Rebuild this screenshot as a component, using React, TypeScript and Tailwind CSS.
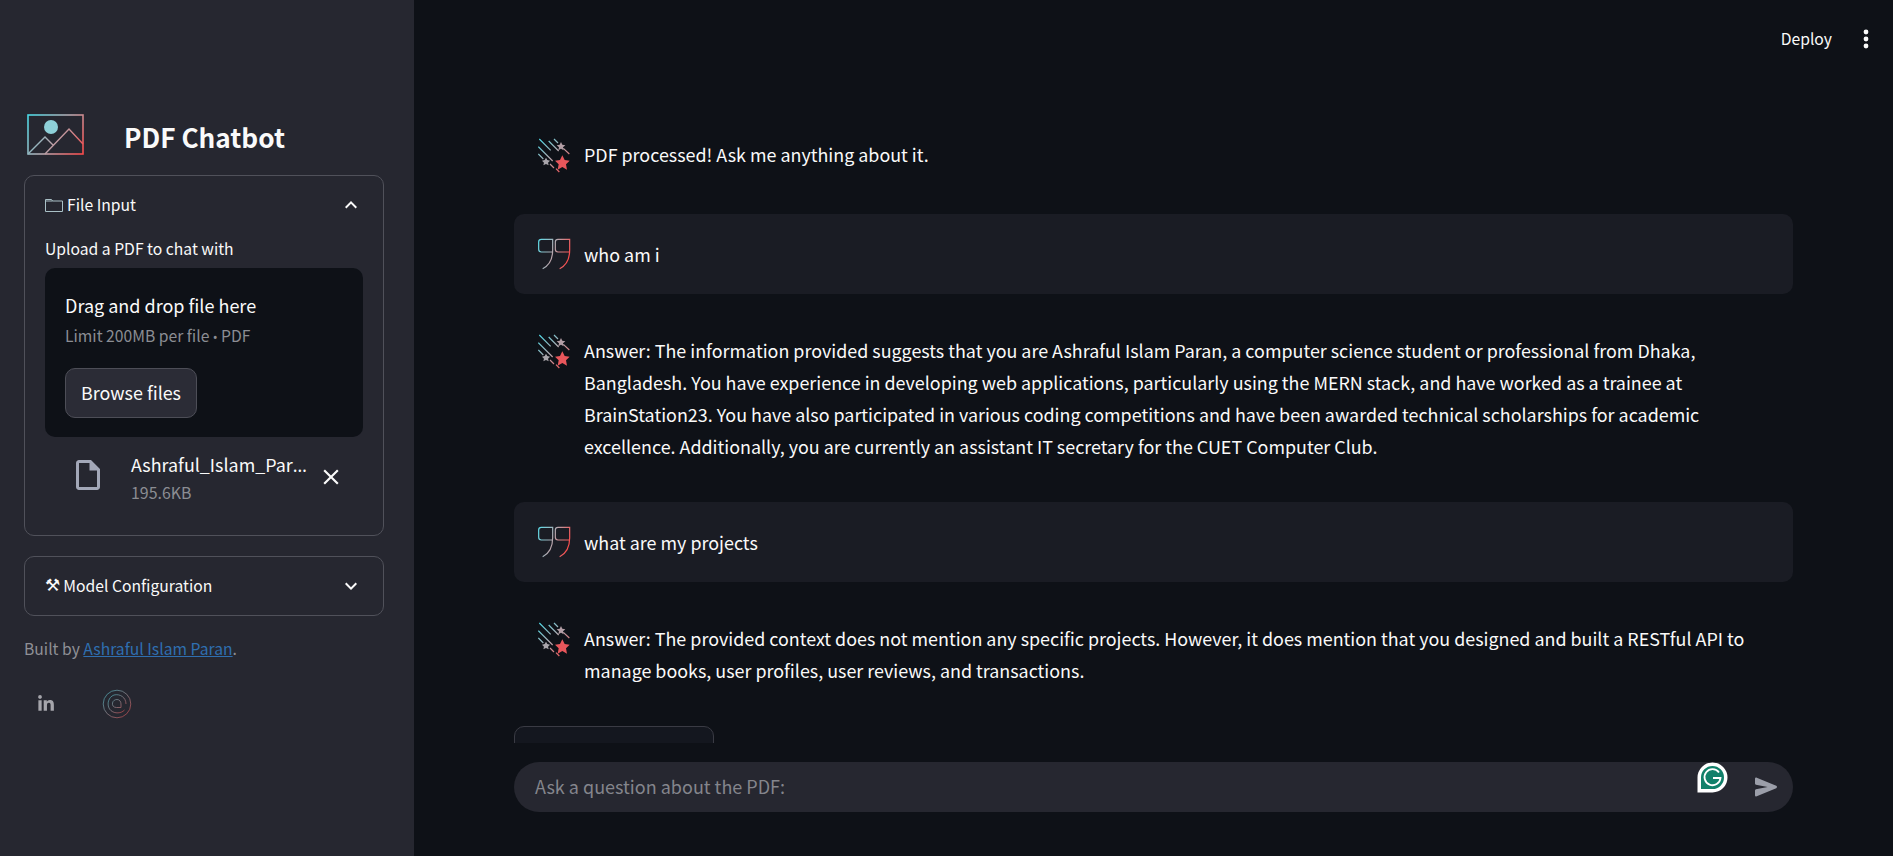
import { FaLinkedinIn } from "react-icons/fa";

const FONT = "font-['Noto_Sans_CJK_SC','Noto_Sans',sans-serif]";

const LINE_TWO = [
  "Answer: The information provided suggests that you are Ashraful Islam Paran, a computer science student or professional from Dhaka,",
  "Bangladesh. You have experience in developing web applications, particularly using the MERN stack, and have worked as a trainee at",
  "BrainStation23. You have also participated in various coding competitions and have been awarded technical scholarships for academic",
  "excellence. Additionally, you are currently an assistant IT secretary for the CUET Computer Club.",
];

const LINE_THREE = [
  "Answer: The provided context does not mention any specific projects. However, it does mention that you designed and built a RESTful API to",
  "manage books, user profiles, user reviews, and transactions.",
];

function Grad({ id }: { id: string }) {
  return (
    <defs>
      <linearGradient id={id} x1="0" y1="0" x2="1" y2="1">
        <stop offset="0%" stopColor="#45dbe8" />
        <stop offset="50%" stopColor="#b6a6ad" />
        <stop offset="100%" stopColor="#ff4242" />
      </linearGradient>
    </defs>
  );
}

function Logo() {
  return (
    <svg width="58" height="42" viewBox="0 0 58 42" fill="none">
      <defs>
        <linearGradient id="logo" gradientUnits="userSpaceOnUse" x1="0" y1="0" x2="58" y2="42">
          <stop offset="0%" stopColor="#45dbe8" />
          <stop offset="50%" stopColor="#b6a6ad" />
          <stop offset="100%" stopColor="#ff4242" />
        </linearGradient>
      </defs>
      <rect x="1" y="1" width="55" height="39" stroke="url(#logo)" strokeWidth="1.6" />
      <circle cx="24" cy="13" r="7" fill="#8ed0d8" />
      <path d="M1 40 L18 23 L26 31 M18 40 L42 15 L56 30" stroke="url(#logo)" strokeWidth="1.4" />
    </svg>
  );
}

function BotIcon() {
  return (
    <svg width="33" height="35" viewBox="24 24 99 105" fill="none" className="shrink-0">
      <defs>
        <linearGradient id="bot" gradientUnits="userSpaceOnUse" x1="24" y1="24" x2="120" y2="126">
          <stop offset="0%" stopColor="#45dbe8" />
          <stop offset="50%" stopColor="#b6a6ad" />
          <stop offset="100%" stopColor="#ff4242" />
        </linearGradient>
      </defs>
      <path
        d="M28 27 L62 61 M56 33 L86 63 M72 27 L84 39 M25 50 L68 93 M100 55 L118 72 M25 72 L40 87 M60 102 L72 114 M78 116 L88 126"
        stroke="url(#bot)"
        strokeWidth="3.6"
      />
      <path d="M93 36l4 8 9 2-7 6 2 9-8-5-8 5 2-9-7-6 9-2z" fill="#b29ea5" />
      <path d="M48 83l4 7 8 2-6 6 2 8-8-4-8 4 2-8-6-6 8-2z" fill="#a8a5ab" />
      <path d="M97 76l7 14 15 2-11 11 3 16-14-8-14 8 3-16-11-11 15-2z" fill="#e8565b" />
    </svg>
  );
}

function UserIcon() {
  return (
    <svg width="33" height="32" viewBox="24 26 99 96" fill="none" className="shrink-0">
      <defs>
        <linearGradient id="usr" gradientUnits="userSpaceOnUse" x1="24" y1="40" x2="122" y2="75">
          <stop offset="0%" stopColor="#5fdbe8" />
          <stop offset="50%" stopColor="#b6a6ad" />
          <stop offset="100%" stopColor="#ff4848" />
        </linearGradient>
      </defs>
      <path
        d="M34 30 H68 V62 C68 88 58 108 38 118 M68 68 H34 Q26 68 26 60 V38 Q26 30 34 30"
        stroke="url(#usr)"
        strokeWidth="3.6"
      />
      <path
        d="M84 30 H119 V62 C119 88 109 108 89 118 M119 68 H84 Q76 68 76 60 V38 Q76 30 84 30"
        stroke="url(#usr)"
        strokeWidth="3.6"
      />
    </svg>
  );
}

function Spiral() {
  return (
    <svg width="30" height="30" viewBox="0 0 30 30" fill="none" className="opacity-70">
      <Grad id="spiral" />
      <circle cx="15" cy="15" r="13.8" stroke="url(#spiral)" strokeWidth="0.8" />
      <path
        d="M22.5 21 C19 25 11 25 7.5 20 C4.5 15 6.5 8 12 6 C18 4.5 24 8.5 24 15 M19 18.5 H14.5 C11.5 18.5 10 16.5 10.5 14 C11 11.5 13 10.5 15 10.5 C17.5 10.5 19 12.5 19 15 V18.5"
        stroke="url(#spiral)"
        strokeWidth="0.8"
      />
    </svg>
  );
}

function Chevron({ up }: { up?: boolean }) {
  return (
    <svg width="24" height="24" viewBox="0 0 24 24" fill="#fafafa">
      {up ? (
        <path d="M12 8l-6 6 1.41 1.41L12 10.83l4.59 4.58L18 14z" />
      ) : (
        <path d="M16.59 8.59 12 13.17 7.41 8.59 6 10l6 6 6-6z" />
      )}
    </svg>
  );
}

function BotMessage({ lines, first }: { lines: string[]; first?: boolean }) {
  return (
    <div className={`flex shrink-0 gap-[13px] py-[24px] pl-[24px] ${first ? "mb-[4px]" : ""}`}>
      <div className="h-[32px]">
        <BotIcon />
      </div>
      <div className="text-[17.9px] leading-[32px] text-[#fafafa] whitespace-nowrap">
        {lines.map((l) => (
          <div key={l}>{l}</div>
        ))}
      </div>
    </div>
  );
}

function UserMessage({ text }: { text: string }) {
  return (
    <div className="flex h-[80px] shrink-0 items-center gap-[13px] rounded-[10px] bg-[#1a1c24] pl-[24px]">
      <UserIcon />
      <div className="text-[17.9px] leading-[32px] text-[#fafafa]">{text}</div>
    </div>
  );
}

export default function App() {
  return (
    <div className={`flex h-[856px] w-[1893px] overflow-hidden bg-[#0e1117] ${FONT}`}>
      {/* Sidebar */}
      <aside className="flex w-[414px] shrink-0 flex-col bg-[#262730] pl-[24px] pt-[114px]">
        <div className="flex h-[48px] items-start pl-[3px]">
          <Logo />
          <h1 className="ml-[39px] -mt-[1px] text-[26.2px] font-semibold leading-[48px] text-[#fafafa]">PDF Chatbot</h1>
        </div>

        <div className="mt-[13px] h-[361px] w-[360px] rounded-[10px] border border-[#50515a] px-[20px]">
          <div className="flex h-[58px] items-center justify-between">
            <div className="flex items-center gap-[4px] text-[15.7px] text-[#fafafa]">
              <svg width="18" height="14" viewBox="0 0 18 14" fill="none" stroke="#a9c0c6" strokeWidth="1">
                <path d="M.5 13.5V1.5h6l1 1.5h10v10.5z" />
                <path d="M.5 3h7" />
              </svg>
              File Input
            </div>
            <div>
              <Chevron up />
            </div>
          </div>
          <div className="mt-[3px] text-[15.7px] leading-[24px] text-[#fafafa]">Upload a PDF to chat with</div>
          <div className="mt-[7px] h-[169px] w-[318px] rounded-[10px] bg-[#0e1117] px-[20px] pt-[21px]">
            <div className="text-[18px] leading-[32px] text-[#fafafa]">Drag and drop file here</div>
            <div className="mt-[3px] text-[15.7px] leading-[24px] text-[#8b8d93]">
              Limit 200MB per file<span className="font-['Noto_Sans'] text-[13px]"> • </span>PDF
            </div>
            <button className="mt-[19px] h-[50px] w-[132px] rounded-[10px] border border-[#4d4e57] bg-[#2b2c36] pb-[2px] text-[17.9px] text-[#fafafa]">
              Browse files
            </button>
          </div>
          <div className="mt-[14px] flex items-start">
            <svg width="36" height="36" viewBox="0 0 24 24" fill="#a3a8b8" className="ml-[25px] mt-[6px] shrink-0">
              <path d="M14 2H6c-1.1 0-1.99.9-1.99 2L4 20c0 1.1.89 2 1.99 2H18c1.1 0 2-.9 2-2V8l-6-6zM6 20V4h7v5h5v11H6z" />
            </svg>
            <div className="ml-[25px] w-[181px]">
              <div className="-mt-[1px] whitespace-nowrap text-[17.9px] leading-[28px] text-[#fafafa]">
                Ashraful_Islam_Par<span className="font-['Noto_Sans'] tracking-[2px]">…</span>
              </div>
              <div className="text-[15.9px] leading-[28px] text-[#8b8d93]">195.6KB</div>
            </div>
            <svg width="26" height="26" viewBox="0 0 24 24" fill="#fafafa" className="ml-[6px] mt-[13px] shrink-0">
              <path d="M19 6.41 17.59 5 12 10.59 6.41 5 5 6.41 10.59 12 5 17.59 6.41 19 12 13.41 17.59 19 19 17.59 13.41 12z" />
            </svg>
          </div>
        </div>

        <div className="mt-[20px] flex h-[60px] w-[360px] items-center justify-between rounded-[10px] border border-[#50515a] pb-[1px] pl-[20px] pr-[20px]">
          <div className="flex items-center gap-[3px] text-[15.7px] text-[#fafafa]">
            <span className="font-['DejaVu_Sans'] text-[17px]">⚒</span>
            Model Configuration
          </div>
          <Chevron />
        </div>

        <div className="mt-[17px] text-[15.7px] leading-[32px] text-[#8f9096]">
          Built by{" "}
          <a className="text-[#2f6fb0] underline">Ashraful Islam Paran</a>.
        </div>

        <div className="mt-[24px] flex items-center pl-[13px]">
          <FaLinkedinIn className="h-[18px] w-[18px] text-[#a5a5ab]" />
          <div className="ml-[47px]">
            <Spiral />
          </div>
        </div>
      </aside>

      {/* Main */}
      <main className="relative flex min-w-0 flex-1 flex-col">
        <header className="flex h-[114px] shrink-0 items-start justify-end pr-[24px] pt-[24px] text-[15.7px] text-[#fafafa]">
          <span className="leading-[30px]">Deploy</span>
          <svg width="6" height="20" viewBox="0 0 6 20" fill="#fafafa" className="ml-[31px] mt-[5px]">
            <circle cx="3" cy="3" r="2.4" />
            <circle cx="3" cy="10" r="2.4" />
            <circle cx="3" cy="17" r="2.4" />
          </svg>
        </header>

        <section className="flex flex-1 flex-col gap-[16px] overflow-hidden px-[100px]">
          <BotMessage first lines={["PDF processed! Ask me anything about it."]} />
          <UserMessage text="who am i" />
          <BotMessage lines={LINE_TWO} />
          <UserMessage text="what are my projects" />
          <BotMessage lines={LINE_THREE} />
          <div className="h-[40px] w-[200px] shrink-0 rounded-t-[10px] border border-[#3a3b44] bg-[#14171f]" />
        </section>

        <div className="flex h-[113px] shrink-0 items-start px-[100px] pt-[19px]">
          <div className="flex h-[50px] w-full items-center justify-between rounded-[25px] bg-[#262730] pl-[21px] pr-[14px]">
            <span className="-mt-[1px] text-[18px] text-[#84858c]">Ask a question about the PDF:</span>
            <svg width="24" height="20" viewBox="3 4.4 19 15.2" fill="#9b9ea9">
              <path d="M3 5.51v3.71c0 .45.31.84.74.93L13 12l-9.26 1.85c-.43.09-.74.48-.74.93v3.71c0 .72.73 1.2 1.39.92l15.42-6.49c.82-.34.82-1.5 0-1.84L4.39 4.58C3.73 4.3 3 4.79 3 5.51z" />
            </svg>
          </div>
        </div>

        {/* Grammarly bubble */}
        <svg width="31" height="31" viewBox="0 0 31 31" className="absolute left-[1283px] top-[762px]">
          <path d="M15.5 0.5a15 15 0 0 1 0 30H0.5V15.5a15 15 0 0 1 15-15z" fill="#ffffff" />
          <path d="M15.5 4a11.5 11.5 0 0 1 0 23H4V15.5A11.5 11.5 0 0 1 15.5 4z" fill="#11806a" />
          <path d="M22 10.5a8 8 0 1 0 1.5 5.5H16" fill="none" stroke="#ffffff" strokeWidth="1.8" />
        </svg>
      </main>
    </div>
  );
}
